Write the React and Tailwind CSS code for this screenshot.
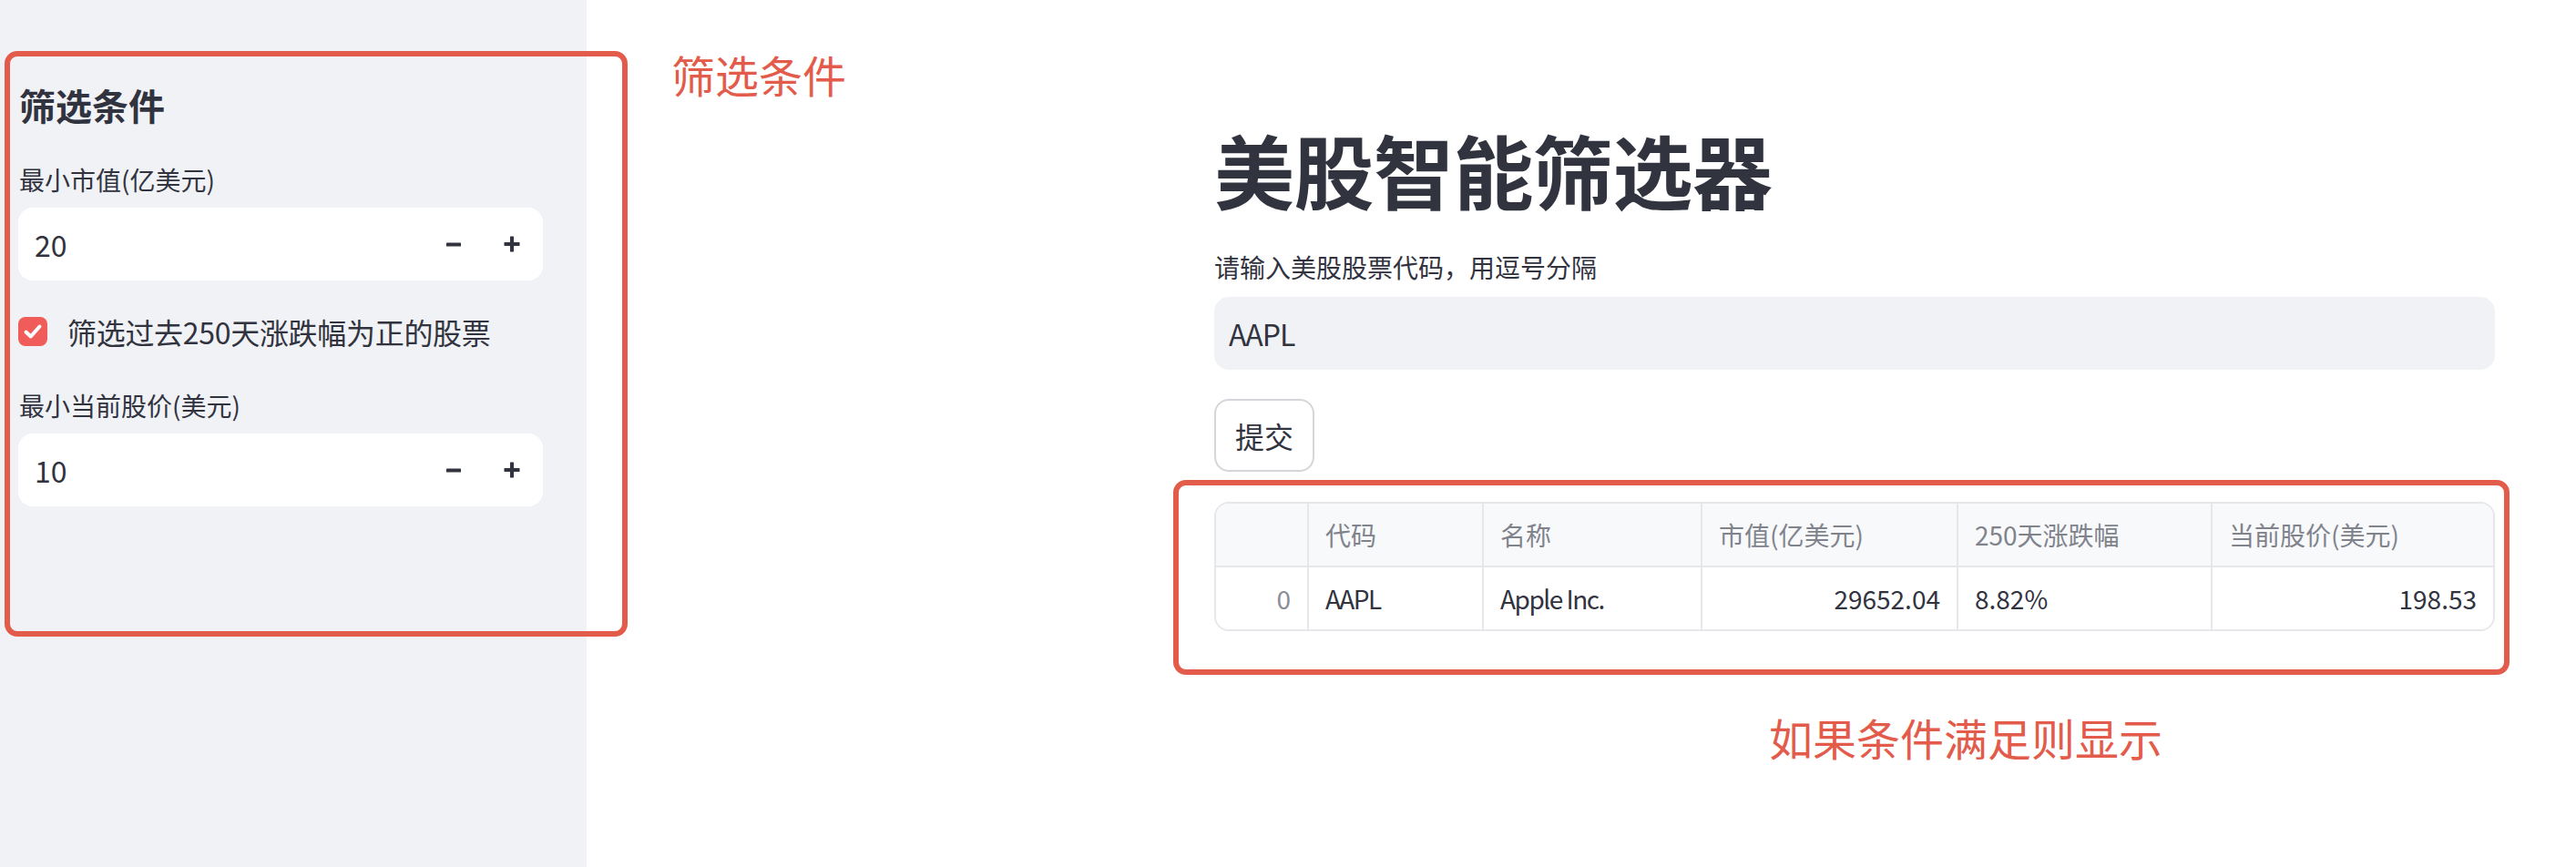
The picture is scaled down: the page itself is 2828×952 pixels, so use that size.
import React from 'react';

const Minus = () => (
    <svg width="18" height="5" viewBox="0 0 18 5"><rect x="1" y="0.5" width="16" height="4" rx="0.5" fill="#31333f"/></svg>
);

const Plus = () => (
    <svg width="18" height="18" viewBox="0 0 18 18">
        <rect x="0.5" y="7" width="17" height="4" rx="0.5" fill="#31333f"/>
        <rect x="7" y="0.5" width="4" height="17" rx="0.5" fill="#31333f"/>
    </svg>
);

function NumberInput({value}) {
    return (
        <div className="flex h-[80px] items-center rounded-[16px] bg-white pl-[18px] pr-[2px]">
            <span className="flex-1 text-[32px] leading-[40px] text-[#31333f]">{value}</span>
            <button className="flex h-full w-[64px] items-center justify-center"><Minus/></button>
            <button className="flex h-full w-[64px] items-center justify-center"><Plus/></button>
        </div>
    );
}

const cols = [
    {title: '', align: 'text-right', w: 'w-[102px]'},
    {title: '代码', align: 'text-left', w: 'w-[192px]'},
    {title: '名称', align: 'text-left', w: 'w-[240px]'},
    {title: '市值(亿美元)', align: 'text-right', w: 'w-[281px]'},
    {title: '250天涨跌幅', align: 'text-left', w: 'w-[279px]'},
    {title: '当前股价(美元)', align: 'text-right', w: 'w-[308px]'},
];

// text cells with letters get a little tighter, the reference font is narrower
const row = ['0', 'AAPL', 'Apple Inc.', '29652.04', '8.82%', '198.53'];
const tight = [false, true, true, false, false, false];

export default function App() {
    return (
        <div className="relative flex h-[952px] w-[2828px] font-['Noto_Sans_CJK_SC','Noto_Sans',sans-serif] text-[#31333f]">

            {/* sidebar */}
            <aside className="w-[644px] shrink-0 bg-[#f0f2f6] px-[20px] pt-[91px]">
                <h2 className="h-[48px] pl-[1px] text-[40px] font-bold leading-[48px]">筛选条件</h2>

                <div className="mt-[38px] h-[40px] pl-[1px] text-[28px] leading-[40px]">最小市值(亿美元)</div>
                <div className="mt-[11px] w-[576px]">
                    <NumberInput value="20"/>
                </div>

                <label className="mt-[40px] flex h-[32px] items-center gap-[22px]">
                    <span className="flex h-[32px] w-[32px] items-center justify-center rounded-[8px] bg-[#f05c5a]">
                        <svg width="22" height="22" viewBox="0 0 22 22" fill="none">
                            <path d="M3.5 11.5 L8.8 16.5 L18.5 5.5" stroke="white" strokeWidth="4" strokeLinecap="round" strokeLinejoin="round"/>
                        </svg>
                    </span>
                    <span className="text-[32px] leading-[40px] tracking-[-0.3px]">筛选过去250天涨跌幅为正的股票</span>
                </label>

                <div className="mt-[45px] h-[40px] pl-[1px] text-[28px] leading-[40px]">最小当前股价(美元)</div>
                <div className="mt-[11px] w-[576px]">
                    <NumberInput value="10"/>
                </div>
            </aside>

            {/* main */}
            <main className="flex-1 bg-white pl-[689px] pr-[89px] pt-[133px]">
                <h1 className="h-[104px] text-[88px] font-bold leading-[104px] tracking-[-0.5px]">美股智能筛选器</h1>

                <div className="mt-[36px] h-[40px] text-[28px] leading-[40px]">请输入美股股票代码，用逗号分隔</div>
                <div className="mt-[13px] flex h-[80px] items-center rounded-[16px] bg-[#f0f2f6] pl-[16px] text-[32px] tracking-[-1px]">AAPL</div>

                <button className="mt-[32px] flex h-[80px] w-[110px] items-center justify-center rounded-[16px] border-2 border-[#d6d6da] bg-white text-[32px]">
                    提交
                </button>

                <div className="mt-[33px] overflow-hidden rounded-[16px] border-2 border-[#e6e7eb] text-[28px]">
                    <div className="flex h-[70px] border-b-2 border-[#e6e7eb] bg-[#f8f9fb] text-[#80838c]">
                        {cols.map((c, i) => (
                            <div key={i}
                                 className={`${c.w} flex items-center px-[18px] ${i < cols.length - 1 ? 'border-r-2 border-[#e6e7eb]' : ''}`}>
                                <span className="w-full text-left">{c.title}</span>
                            </div>
                        ))}
                    </div>
                    <div className="flex h-[68px] bg-white">
                        {cols.map((c, i) => (
                            <div key={i}
                                 className={`${c.w} flex items-center px-[18px] ${i < cols.length - 1 ? 'border-r-2 border-[#e6e7eb]' : ''}`}>
                                <span className={`w-full ${c.align} ${i === 0 ? 'text-[#8a8d95]' : ''} ${tight[i] ? 'tracking-[-1.5px]' : ''}`}>{row[i]}</span>
                            </div>
                        ))}
                    </div>
                </div>
            </main>

            {/* annotations */}
            <div className="pointer-events-none absolute left-[5px] top-[56px] h-[643px] w-[684px] rounded-[14px] border-[6px] border-[#e35b4a]"/>
            <div className="pointer-events-none absolute left-[737px] top-[53px] text-[48px] leading-[56px] text-[#e35b4a]">筛选条件</div>
            <div className="pointer-events-none absolute left-[1288px] top-[527px] h-[214px] w-[1467px] rounded-[14px] border-[6px] border-[#e35b4a]"/>
            <div className="pointer-events-none absolute left-[1942px] top-[781px] text-[48px] leading-[56px] text-[#e35b4a]">如果条件满足则显示</div>
        </div>
    );
}
